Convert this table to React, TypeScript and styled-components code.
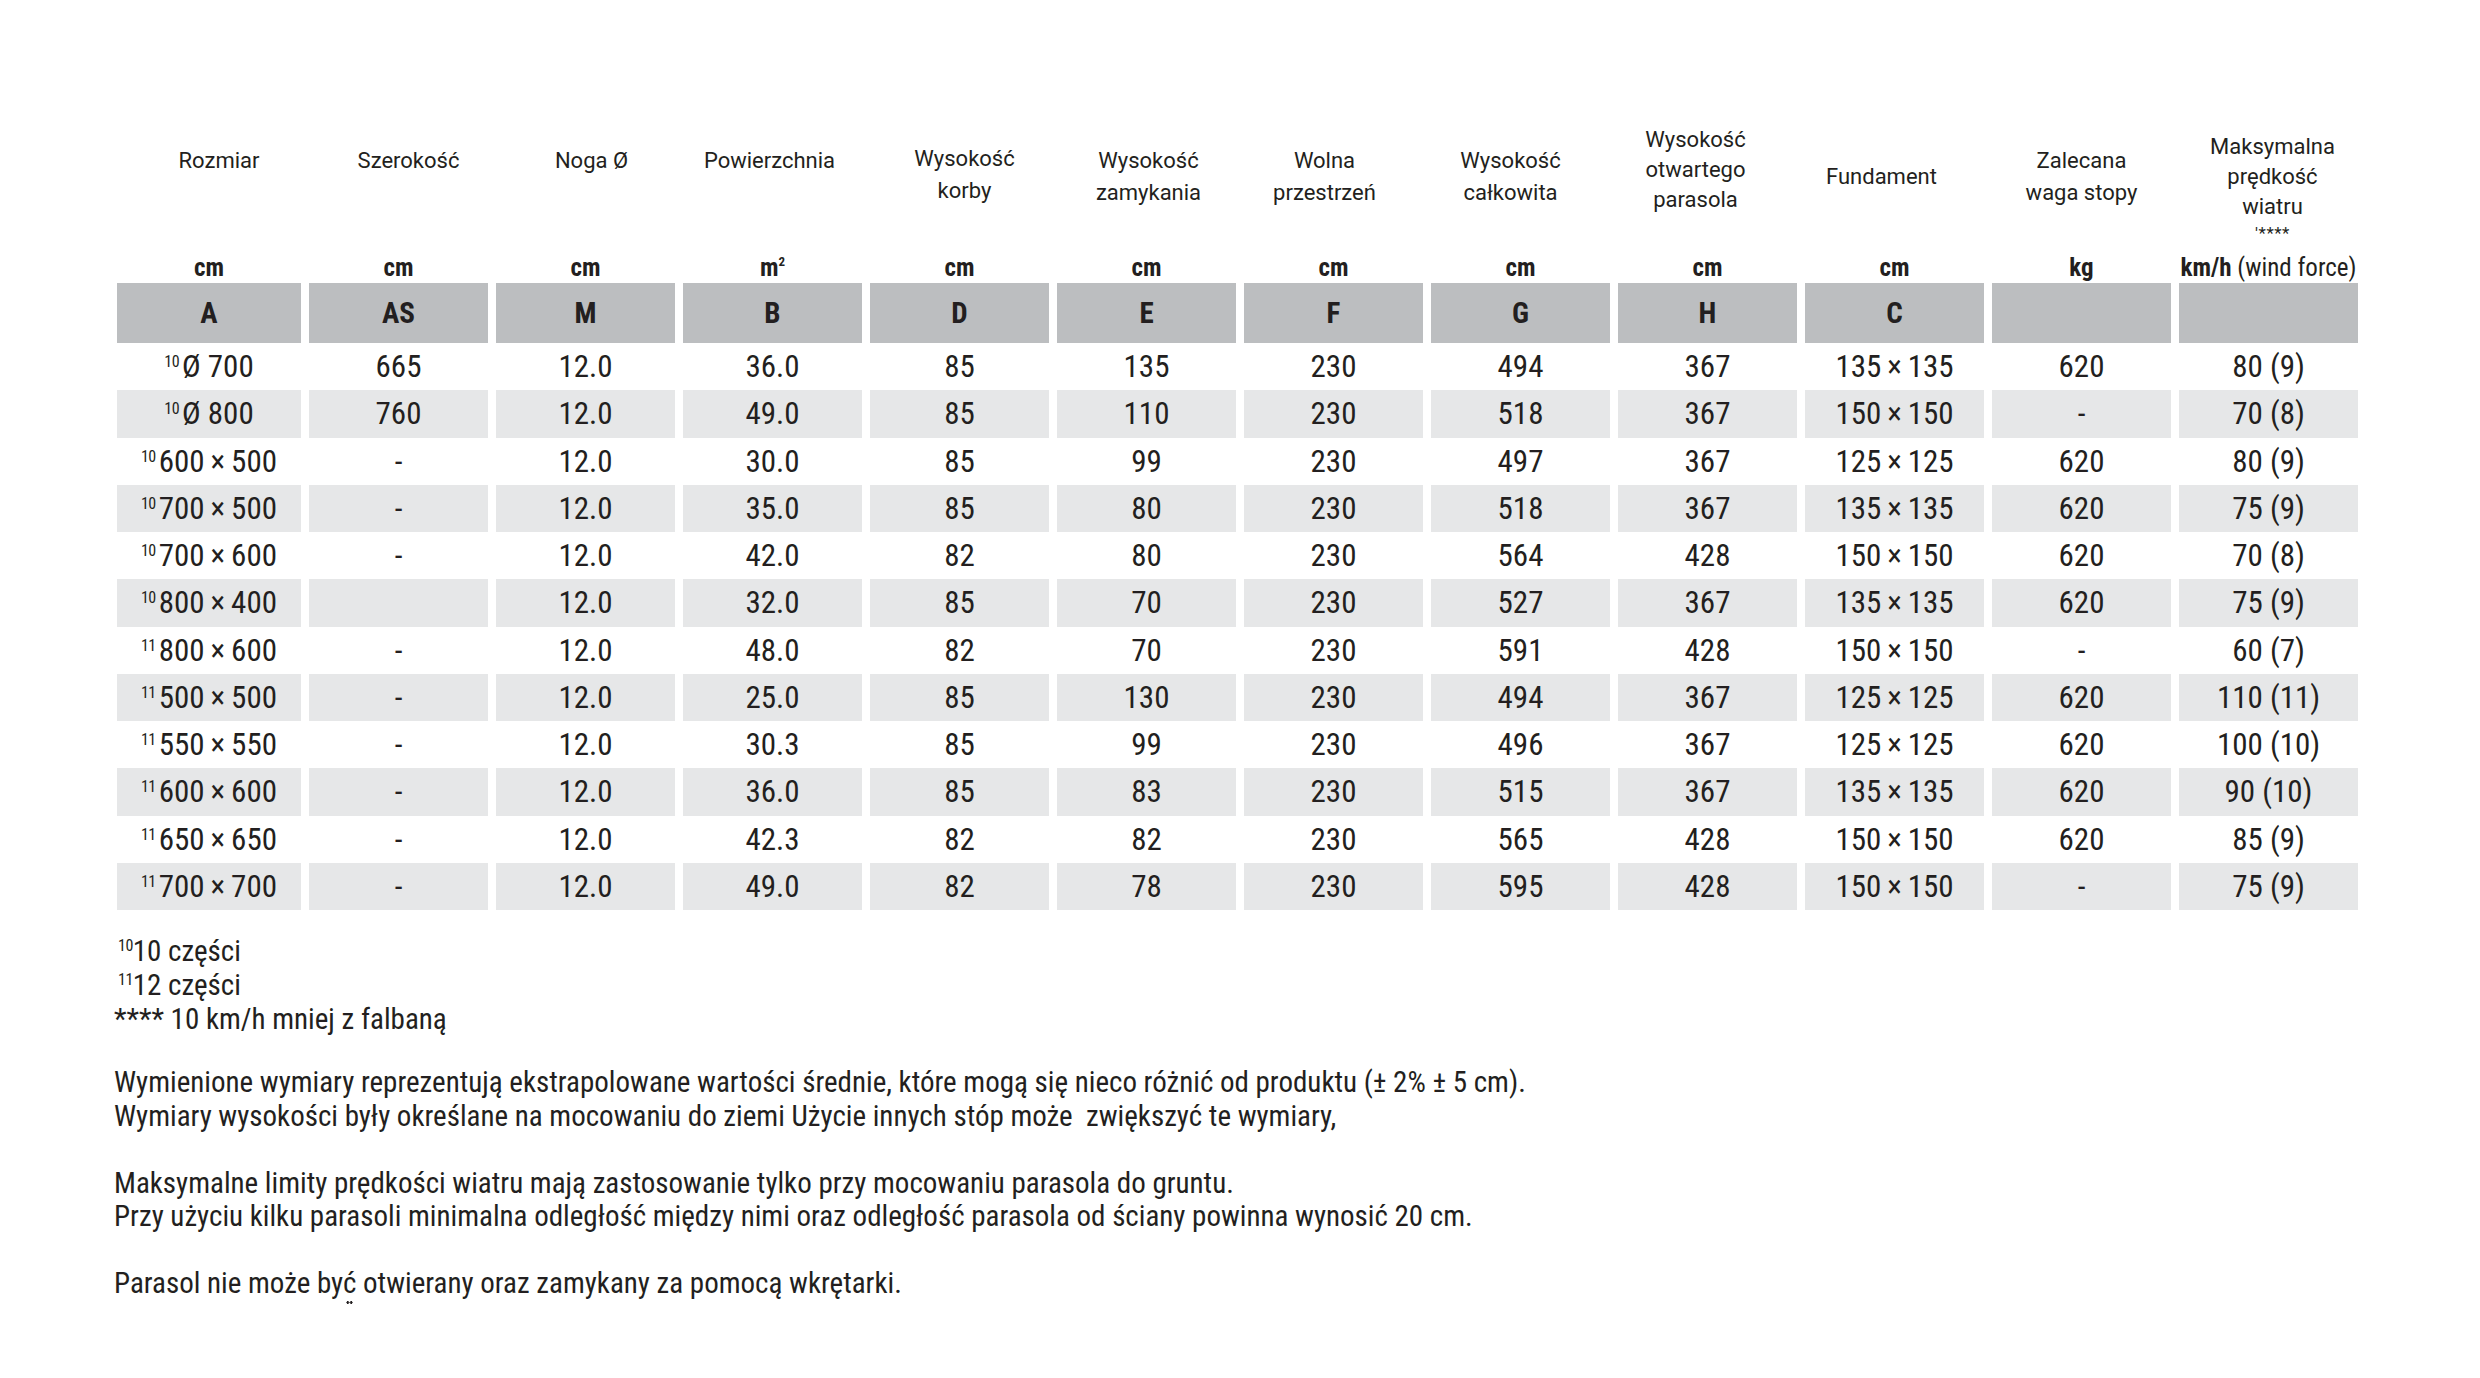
import React from 'react';
import styled, { createGlobalStyle } from 'styled-components';

const COND = `"Roboto Condensed", "Roboto", "Liberation Sans Narrow", sans-serif`;

const GlobalStyle = createGlobalStyle`
  html, body { margin: 0; padding: 0; background: #ffffff; }
  body { font-family: ${COND}; color: #231f20; }
`;

const Page = styled.div`
  width: 2480px;
  height: 1378px;
  box-sizing: border-box;
  padding: 110px 0 0 114px;
  display: flex;
  flex-direction: column;
  font-stretch: condensed;
`;

const Table = styled.div`
  margin-left: 3px;
  display: flex;
  flex-direction: column;
`;

const Grid = styled.div`
  display: grid;
  grid-template-columns: 184px repeat(11, 179px);
  column-gap: 8px;
  width: 2241px;
`;

const LabelRow = styled(Grid)`
  height: 131px;
`;

const Label = styled.div<{ $dy?: number; $dx?: number }>`
  display: flex;
  align-items: center;
  justify-content: center;
  box-sizing: border-box;
  padding-top: ${(p) => (p.$dy && p.$dy > 0 ? p.$dy * 2 : 0)}px;
  padding-bottom: ${(p) => (p.$dy && p.$dy < 0 ? -p.$dy * 2 : 0)}px;
  padding-left: ${(p) => (p.$dx && p.$dx > 0 ? p.$dx * 2 : 0)}px;
  padding-right: ${(p) => (p.$dx && p.$dx < 0 ? -p.$dx * 2 : 0)}px;
`;

const LabelText = styled.div<{ $lh?: number }>`
  font-family: "Roboto", sans-serif;
  font-stretch: normal;
  font-size: 22px;
  line-height: ${(p) => p.$lh ?? 32}px;
  text-align: center;
  color: #231f20;
`;

const Stars = styled.span`
  display: block;
  font-size: 17px;
  line-height: 22px;
  letter-spacing: 0.5px;
`;

const UnitRow = styled(Grid)`
  height: 42px;
  align-items: end;
`;

const Unit = styled.div`
  text-align: center;
  font-family: ${COND};
  font-weight: 700;
  font-size: 25px;
  line-height: 28px;
  padding-bottom: 1px;
  white-space: nowrap;
`;

const UnitNote = styled.span`
  font-weight: 400;
`;

const UnitSup = styled.sup`
  font-size: 13px;
  vertical-align: 10px;
  line-height: 0;
`;

const BandRow = styled(Grid)`
  height: 60px;
`;

const BandCell = styled.div`
  background: #bcbec0;
  display: flex;
  align-items: center;
  justify-content: center;
  font-family: ${COND};
  font-weight: 700;
  font-size: 29px;
`;

const DataRow = styled(Grid)`
  height: 47.25px;
`;

const Cell = styled.div<{ $shade: boolean }>`
  background: ${(p) => (p.$shade ? '#e6e7e8' : 'transparent')};
  display: flex;
  align-items: center;
  justify-content: center;
  font-family: ${COND};
  font-weight: 400;
  font-size: 31px;
  white-space: nowrap;
  color: #231f20;
`;

const Sup = styled.span`
  font-size: 16px;
  align-self: flex-start;
  margin-top: 9px;
  margin-right: 3px;
  letter-spacing: -0.5px;
`;

const Notes = styled.div`
  margin-top: 24px;
  font-family: ${COND};
  font-size: 29px;
  line-height: 34px;
`;

const NoteLine = styled.div`
  white-space: pre;
`;

const NoteSup = styled.span`
  font-size: 16px;
  vertical-align: 10px;
  line-height: 0;
  margin-left: 4px;
  letter-spacing: -0.5px;
`;

const Paras = styled.div`
  margin-top: 30px;
  font-family: ${COND};
  font-size: 29px;
  line-height: 33.5px;
`;

const Para = styled.p`
  margin: 0 0 33.5px 0;
  white-space: pre;
`;

const Mark = styled.span`
  position: relative;
`;

const Dots = styled.span`
  position: absolute;
  left: 29px;
  top: 35px;
  width: 7px;
  height: 3px;
  background: radial-gradient(circle, #231f20 1.2px, transparent 1.5px) 0 0 / 3.5px 3px repeat-x;
`;

type LabelDef = { lines: React.ReactNode; dy?: number; dx?: number; lh?: number };

const labels: LabelDef[] = [
  { lines: 'Rozmiar', dy: -16, dx: 10 },
  { lines: 'Szerokość', dy: -16, dx: 10 },
  { lines: 'Noga Ø', dy: -16, dx: 6 },
  { lines: 'Powierzchnia', dy: -16, dx: -3 },
  { lines: <>Wysokość<br />korby</>, dy: -2, dx: 5 },
  { lines: <>Wysokość<br />zamykania</>, dy: 0, dx: 2 },
  { lines: <>Wolna<br />przestrzeń</>, dy: 0, dx: -9 },
  { lines: <>Wysokość<br />całkowita</>, dy: 0, dx: -10 },
  { lines: <>Wysokość<br />otwartego<br />parasola</>, dy: -7.5, dx: -12, lh: 30 },
  { lines: 'Fundament', dy: 0, dx: -13 },
  { lines: <>Zalecana<br />waga stopy</>, dy: 0, dx: 0 },
  {
    lines: (
      <>
        Maksymalna<br />prędkość<br />wiatru
        <Stars>'****</Stars>
      </>
    ),
    dy: 11,
    dx: 4,
    lh: 30,
  },
];

const units: React.ReactNode[] = [
  'cm',
  'cm',
  'cm',
  <>m<UnitSup>2</UnitSup></>,
  'cm',
  'cm',
  'cm',
  'cm',
  'cm',
  'cm',
  'kg',
  <>km/h <UnitNote>(wind force)</UnitNote></>,
];

const letters = ['A', 'AS', 'M', 'B', 'D', 'E', 'F', 'G', 'H', 'C', '', ''];

const X = '\u2009×\u2009';

type Row = { sup: string; size: string; rest: string[] };

const rows: Row[] = [
  { sup: '10', size: 'Ø 700', rest: ['665', '12.0', '36.0', '85', '135', '230', '494', '367', `135${X}135`, '620', '80 (9)'] },
  { sup: '10', size: 'Ø 800', rest: ['760', '12.0', '49.0', '85', '110', '230', '518', '367', `150${X}150`, '-', '70 (8)'] },
  { sup: '10', size: `600${X}500`, rest: ['-', '12.0', '30.0', '85', '99', '230', '497', '367', `125${X}125`, '620', '80 (9)'] },
  { sup: '10', size: `700${X}500`, rest: ['-', '12.0', '35.0', '85', '80', '230', '518', '367', `135${X}135`, '620', '75 (9)'] },
  { sup: '10', size: `700${X}600`, rest: ['-', '12.0', '42.0', '82', '80', '230', '564', '428', `150${X}150`, '620', '70 (8)'] },
  { sup: '10', size: `800${X}400`, rest: ['', '12.0', '32.0', '85', '70', '230', '527', '367', `135${X}135`, '620', '75 (9)'] },
  { sup: '11', size: `800${X}600`, rest: ['-', '12.0', '48.0', '82', '70', '230', '591', '428', `150${X}150`, '-', '60 (7)'] },
  { sup: '11', size: `500${X}500`, rest: ['-', '12.0', '25.0', '85', '130', '230', '494', '367', `125${X}125`, '620', '110 (11)'] },
  { sup: '11', size: `550${X}550`, rest: ['-', '12.0', '30.3', '85', '99', '230', '496', '367', `125${X}125`, '620', '100 (10)'] },
  { sup: '11', size: `600${X}600`, rest: ['-', '12.0', '36.0', '85', '83', '230', '515', '367', `135${X}135`, '620', '90 (10)'] },
  { sup: '11', size: `650${X}650`, rest: ['-', '12.0', '42.3', '82', '82', '230', '565', '428', `150${X}150`, '620', '85 (9)'] },
  { sup: '11', size: `700${X}700`, rest: ['-', '12.0', '49.0', '82', '78', '230', '595', '428', `150${X}150`, '-', '75 (9)'] },
];

export default function App() {
  return (
    <>
      <GlobalStyle />
      <Page>
        <Table>
          <LabelRow>
            {labels.map((l, i) => (
              <Label key={i} $dy={l.dy} $dx={l.dx}>
                <LabelText $lh={l.lh}>{l.lines}</LabelText>
              </Label>
            ))}
          </LabelRow>
          <UnitRow>
            {units.map((u, i) => (
              <Unit key={i}>{u}</Unit>
            ))}
          </UnitRow>
          <BandRow>
            {letters.map((l, i) => (
              <BandCell key={i}>{l}</BandCell>
            ))}
          </BandRow>
          {rows.map((r, ri) => (
            <DataRow key={ri}>
              <Cell $shade={ri % 2 === 1}>
                <Sup>{r.sup}</Sup>
                {r.size}
              </Cell>
              {r.rest.map((v, ci) => (
                <Cell key={ci} $shade={ri % 2 === 1}>
                  {v}
                </Cell>
              ))}
            </DataRow>
          ))}
        </Table>
        <Notes>
          <NoteLine>
            <NoteSup>10</NoteSup>10 części
          </NoteLine>
          <NoteLine>
            <NoteSup>11</NoteSup>12 części
          </NoteLine>
          <NoteLine>**** 10 km/h mniej z falbaną</NoteLine>
        </Notes>
        <Paras>
          <Para>
            {'Wymienione wymiary reprezentują ekstrapolowane wartości średnie, które mogą się nieco różnić od produktu (± 2% ± 5 cm).\nWymiary wysokości były określane na mocowaniu do ziemi Użycie innych stóp może  zwiększyć te wymiary,'}
          </Para>
          <Para>
            {'Maksymalne limity prędkości wiatru mają zastosowanie tylko przy mocowaniu parasola do gruntu.\nPrzy użyciu kilku parasoli minimalna odległość między nimi oraz odległość parasola od ściany powinna wynosić 20 cm.'}
          </Para>
          <Para>
            {'Parasol nie może '}
            <Mark>
              być
              <Dots />
            </Mark>
            {' otwierany oraz zamykany za pomocą wkrętarki.'}
          </Para>
        </Paras>
      </Page>
    </>
  );
}
